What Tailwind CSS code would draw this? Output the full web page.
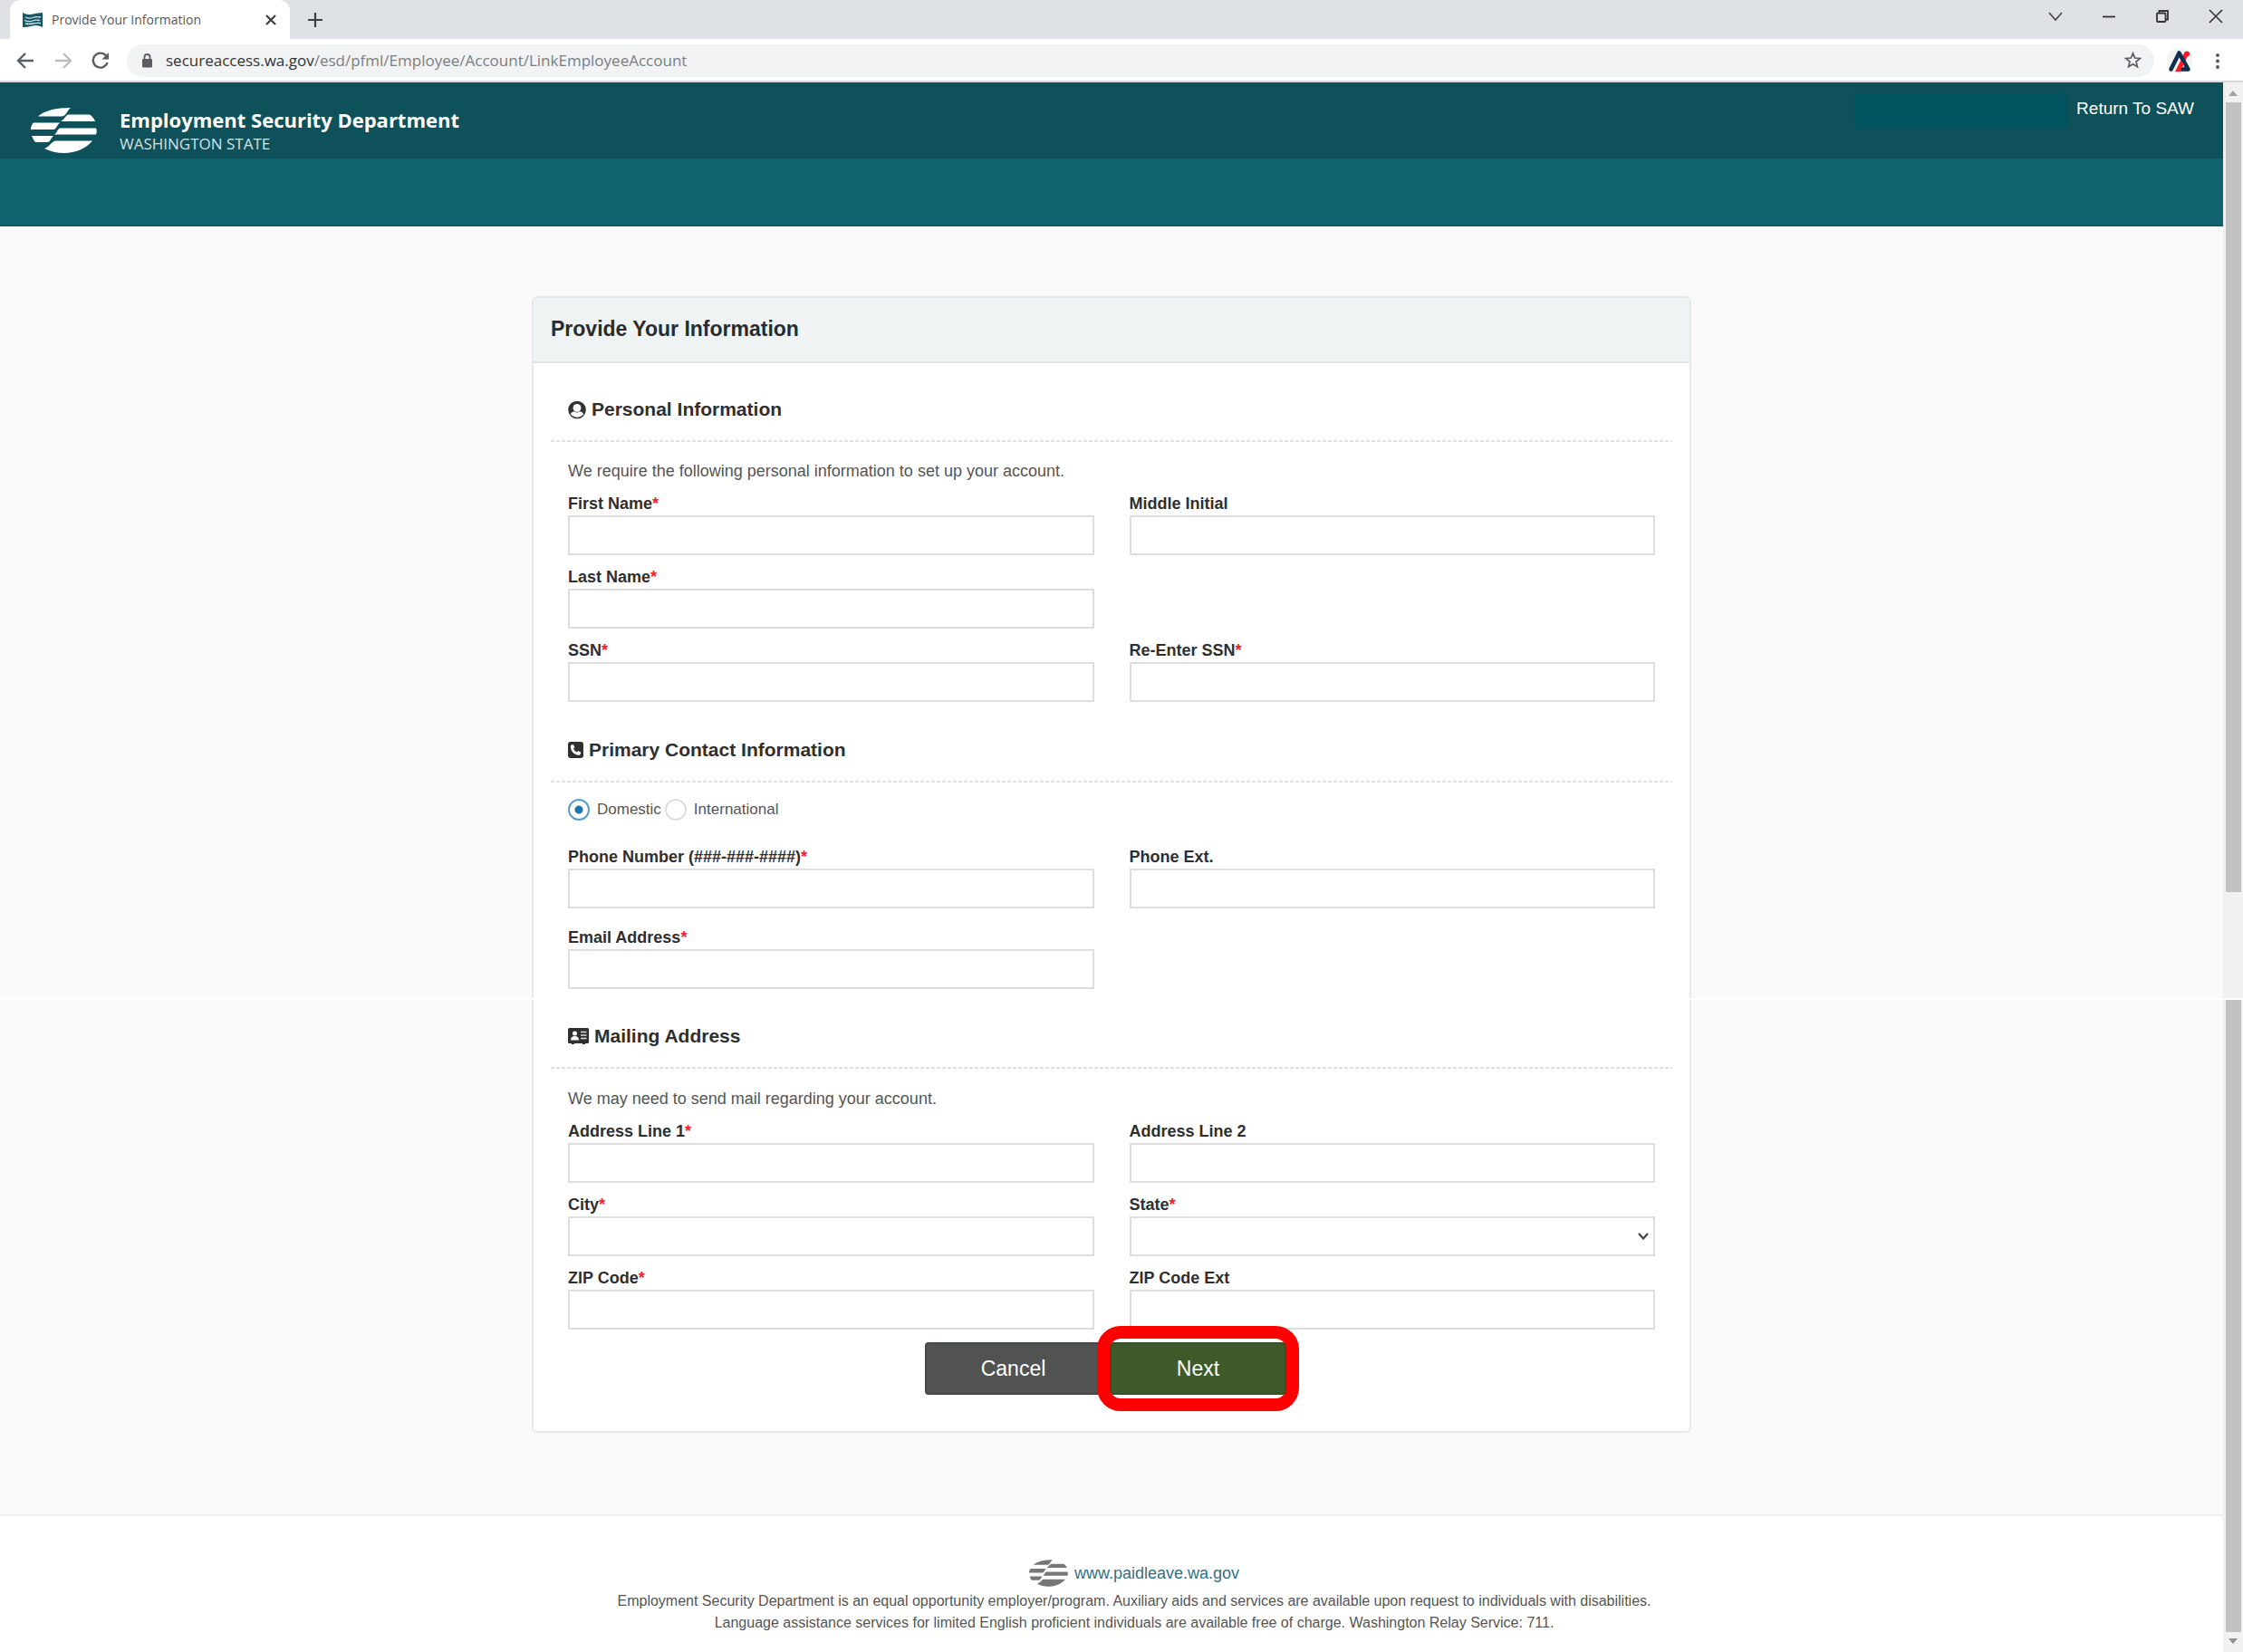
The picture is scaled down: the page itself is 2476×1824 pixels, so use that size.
<!DOCTYPE html>
<html lang="en">
<head>
  <meta charset="UTF-8" />
  <meta name="viewport" content="width=device-width, initial-scale=1" />
  <title>Provide Your Information</title>
  <!-- Tailwind CSS CDN -->
  <script src="https://cdn.jsdelivr.net/npm/@tailwindcss/browser@4"></script>
</head>
<body class="bg-white min-h-screen flex flex-col font-['Liberation_Sans',Arial,sans-serif] text-[18px] text-[#555]">

  <!-- Shared symbols -->
  <svg class="hidden" aria-hidden="true">
    <symbol id="esd-logo" viewBox="0 0 73 50">
      <path d="M8 9.500 C15 3 28 0 44 0 C40 3 39 9.500 34 9.500 Z" />
      <path d="M41 7.500 H65 C68 9.500 70 12 71 15 H33 C37 13 38 9 41 7.500 Z" />
      <path d="M3 16.500 H32 C29 19 28 24 25 24 H0 C0 21 1 18 3 16.500 Z" />
      <path d="M32 22.500 H72 C73 24 73 27 72 29.500 H26 C29 28 29 24 32 22.500 Z" />
      <path d="M1 31 H25 C22 33 22 38 18 38 H5 C3 36 2 33 1 31 Z" />
      <path d="M27 36.500 H68 C61 45 49 50 37 50 C29 50 21 48 15 45 C21 43 22 38 27 36.500 Z" />
    </symbol>
  </svg>

  <!-- Browser window -->
  <div class="bg-[#dee1e6] h-[43px] flex items-center pl-[11px] pr-[22px] text-[#3c4043]">
    <div class="bg-white h-full w-[309px] rounded-t-xl flex items-center pl-[14px] pr-[14px]">
      <svg class="w-[22px] h-[16px]" viewBox="0 0 22 16">
        <path d="M0 0 Q5 3 11 1.500 T22 0 V16 Q16 13 11 14.500 T0 16 Z" fill="#165866" />
        <path d="M3 5 Q7 7 11 5.500 T20 5 M2 8.500 Q7 10.500 11 9 T19 8.500 M3 12 Q7 13 11 12 T20 11.500" stroke="#cfe0e3" stroke-width="1.300" fill="none" />
      </svg>
      <span class="ml-[10px] grow font-['Open_Sans',sans-serif] text-[14px] text-[#55585c] whitespace-nowrap">Provide Your Information</span>
      <button type="button" aria-label="Close tab">
        <svg class="w-[14px] h-[14px]" viewBox="0 0 14 14" stroke="#3c4043" stroke-width="2.200"><path d="M2 2 L12 12 M12 2 L2 12" /></svg>
      </button>
    </div>
    <button type="button" aria-label="New tab" class="ml-5">
      <svg class="w-[16px] h-[16px]" viewBox="0 0 16 16" stroke="#3c4043" stroke-width="2.200"><path d="M8 0 V16 M0 8 H16" /></svg>
    </button>
    <div class="ml-auto flex items-center gap-[43px] pb-[7px]">
      <button type="button" aria-label="Search tabs"><svg class="w-[16px] h-[16px]" viewBox="0 0 16 16" fill="none" stroke="#444" stroke-width="1.600"><path d="M1 4 L8 12 L15 4" /></svg></button>
      <button type="button" aria-label="Minimize"><svg class="w-[16px] h-[16px]" viewBox="0 0 16 16" stroke="#333" stroke-width="1.800"><path d="M1 8.500 H15" /></svg></button>
      <button type="button" aria-label="Restore"><svg class="w-[16px] h-[16px]" viewBox="0 0 16 16" fill="none" stroke="#333" stroke-width="1.800"><rect x="2" y="4.500" width="9.500" height="9.500" rx="1" /><path d="M4.500 4 V2 H14 V11.500 H12" /></svg></button>
      <button type="button" aria-label="Close"><svg class="w-[16px] h-[16px]" viewBox="0 0 16 16" stroke="#333" stroke-width="1.600"><path d="M1 1 L15 15 M15 1 L1 15" /></svg></button>
    </div>
  </div>
  <div class="bg-white h-12 border-b-2 border-[#d5d8db] flex items-center pt-px pl-[18px] pr-[24px]">
    <button type="button" aria-label="Back"><svg class="w-5 h-5" viewBox="0 0 20 20" fill="none" stroke="#5a5d61" stroke-width="2.300"><path d="M19 10 H3 M10 2 L2 10 L10 18" /></svg></button>
    <button type="button" aria-label="Forward" class="ml-[22px]"><svg class="w-5 h-5" viewBox="0 0 20 20" fill="none" stroke="#b9bbbe" stroke-width="2.300"><path d="M1 10 H17 M10 2 L18 10 L10 18" /></svg></button>
    <button type="button" aria-label="Reload" class="ml-[21px]"><svg class="w-5 h-5" viewBox="0 0 20 20" fill="none" stroke="#5a5d61" stroke-width="2.400"><path d="M17.500 12 A8 8 0 1 1 16 4.500" /><path d="M19 1 V8.500 H11.500 Z" fill="#5a5d61" stroke="none" /></svg></button>
    <div class="ml-[19px] grow h-9 rounded-full bg-[#f1f3f4] flex items-center pl-[16px] pr-[14px]">
      <svg class="w-[13px] h-[16px]" viewBox="0 0 13 16"><path d="M3.500 7 V4 A3 3 0 0 1 9.500 4 V7" fill="none" stroke="#5a5d61" stroke-width="1.800" /><rect x="1" y="6" width="11" height="9.500" rx="1.300" fill="#5a5d61" /></svg>
      <span class="ml-[14px] grow font-['Open_Sans',sans-serif] text-[17px] text-[#7b7e82]"><span class="text-[#303337]">secureaccess.wa.gov</span>/esd/pfml/Employee/Account/LinkEmployeeAccount</span>
      <svg class="w-[19px] h-[19px]" viewBox="0 0 20 20" fill="none" stroke="#5a5d61" stroke-width="1.800"><path d="M10 2 L12.300 7.400 L18.200 7.900 L13.700 11.700 L15.100 17.500 L10 14.400 L4.900 17.500 L6.300 11.700 L1.800 7.900 L7.700 7.400 Z" /></svg>
    </div>
    <svg class="ml-[14px] w-7 h-7" viewBox="0 0 28 28">
      <circle cx="14" cy="14" r="14" fill="#f1f3f4" />
      <path d="M21 7 L17 15" stroke="#fb1a24" stroke-width="5" />
      <circle cx="22" cy="6.500" r="3" fill="#fb1a24" />
      <path d="M4.500 23.500 L13.500 5.500 L23.500 23.500 H16" fill="none" stroke="#0e2f50" stroke-width="4.600" stroke-linecap="round" stroke-linejoin="round" />
      <path d="M9 26 L15 14 L19 17.500 L14.500 26 Z" fill="#fb1a24" />
      <path d="M8 26 L14.500 13" stroke="#fff" stroke-width="1" />
    </svg>
    <button type="button" aria-label="Menu" class="ml-[24px]"><svg class="w-[8px] h-5" viewBox="0 0 8 20" fill="#5a5d61"><circle cx="4" cy="4" r="2" /><circle cx="4" cy="10.500" r="2" /><circle cx="4" cy="17" r="2" /></svg></button>
  </div>

  <form class="grow flex flex-col">
    <!-- Upper half -->
    <div class="flex">
      <div class="grow bg-[#fafafa]">
        <header>
          <div class="bg-[#0e515a] h-[84px] flex pl-[34px] pr-8 text-white">
            <svg class="w-[73px] h-[50px] mt-[28px] fill-white"><use href="#esd-logo" /></svg>
            <div class="ml-[25px] mt-[27px] font-['Open_Sans',sans-serif]">
              <p class="text-[22px] leading-[28px] font-bold">Employment Security Department</p>
              <p class="text-[17px] leading-[26px] text-[#d3e0e2]">WASHINGTON STATE</p>
            </div>
            <div class="ml-auto mt-3 w-[235px] h-[39px] bg-[#00535f]"></div>
            <a href="#" class="ml-[10px] mt-4 text-[19px] leading-[26px]">Return To SAW</a>
          </div>
          <div class="bg-[#11646f] h-[75px] border-b-2 border-[#0e5863]"></div>
        </header>

        <main class="pt-[77px] flex justify-center">
          <div class="w-full max-w-[1280px] bg-white border-2 border-b-0 border-[#e6e8e9] rounded-t-md">
            <h1 class="bg-[#eff3f4] border-b-2 border-[#e1e5e6] h-[72px] pl-[19px] pb-[2px] flex items-center text-[23px] font-bold text-[#2b2b2b]">Provide Your Information</h1>
            <div class="px-[19px] pt-[35px] pb-[10px]">
              <h2 class="px-[19px] pb-5 bg-[repeating-linear-gradient(90deg,#e2e2e2_0_4px,transparent_4px_6px)] bg-[length:100%_2px] bg-no-repeat bg-bottom flex items-center gap-[6px] text-[21px] leading-[32px] font-bold text-[#2f2f2f]">
                <svg class="w-[20px] h-[21px]" viewBox="0 0 21 21">
                  <circle cx="10.500" cy="10.500" r="9.500" fill="#333" stroke="#333" stroke-width="1.600" />
                  <path d="M3 15.500 C4 13 6 12.500 7.500 12.300 C9.500 14 11.500 14 13.500 12.300 C15 12.500 17 13 18 15.500 C14.500 20.300 6.500 20.300 3 15.500 Z" fill="#fff" />
                  <circle cx="10.500" cy="8.300" r="4.600" fill="#fff" />
                </svg>
                Personal Information
              </h2>
              <div class="px-[19px] pt-[19px]">
                <p class="leading-[26px] mb-[10px]">We require the following personal information to set up your account.</p>
                <div class="grid grid-cols-2 gap-x-[39px] gap-y-[11px]">
                  <div>
                    <label for="first" class="block leading-[26px] font-bold text-[#2f2f2f]">First Name<span class="text-[#f5222d]">*</span></label>
                    <input id="first" type="text" class="block w-full h-11 border-2 border-[#dedede] bg-white px-3" />
                  </div>
                  <div>
                    <label for="middle" class="block leading-[26px] font-bold text-[#2f2f2f]">Middle Initial</label>
                    <input id="middle" type="text" class="block w-full h-11 border-2 border-[#dedede] bg-white px-3" />
                  </div>
                  <div>
                    <label for="last" class="block leading-[26px] font-bold text-[#2f2f2f]">Last Name<span class="text-[#f5222d]">*</span></label>
                    <input id="last" type="text" class="block w-full h-11 border-2 border-[#dedede] bg-white px-3" />
                  </div>
                  <div class="col-start-1">
                    <label for="ssn" class="block leading-[26px] font-bold text-[#2f2f2f]">SSN<span class="text-[#f5222d]">*</span></label>
                    <input id="ssn" type="text" class="block w-full h-11 border-2 border-[#dedede] bg-white px-3" />
                  </div>
                  <div>
                    <label for="ssn2" class="block leading-[26px] font-bold text-[#2f2f2f]">Re-Enter SSN<span class="text-[#f5222d]">*</span></label>
                    <input id="ssn2" type="text" class="block w-full h-11 border-2 border-[#dedede] bg-white px-3" />
                  </div>
                </div>
              </div>

              <h2 class="mt-[37px] px-[19px] pb-5 bg-[repeating-linear-gradient(90deg,#e2e2e2_0_4px,transparent_4px_6px)] bg-[length:100%_2px] bg-no-repeat bg-bottom flex items-center gap-[6px] text-[21px] leading-[32px] font-bold text-[#2f2f2f]">
                <svg class="w-[17px] h-[18px]" viewBox="0 0 17 18">
                  <rect width="17" height="18" rx="3" fill="#2f2f2f" />
                  <path d="M3 4 L5.500 2.800 L7.500 6.200 L6 7.500 C6.800 9.500 8 10.700 9.800 11.500 L11.200 10 L14.300 11.800 L13.300 14.500 C8 16 2 10 3 4 Z" fill="#fff" />
                </svg>
                Primary Contact Information
              </h2>
              <div class="px-[19px] pt-[18px]">
                <div class="flex items-center text-[17px] leading-[24px] h-6 mb-[27px]">
                  <input id="domestic" type="radio" name="region" checked class="appearance-none w-6 h-6 rounded-full border-2 border-[#dedede] checked:border-[#5b9dc9] bg-white checked:bg-[radial-gradient(circle,#1f76ac_4px,transparent_5px)]" />
                  <label for="domestic" class="ml-2">Domestic</label>
                  <input id="international" type="radio" name="region" class="ml-1 appearance-none w-6 h-6 rounded-full border-2 border-[#dedede] checked:border-[#5b9dc9] bg-white checked:bg-[radial-gradient(circle,#1f76ac_4px,transparent_5px)]" />
                  <label for="international" class="ml-2">International</label>
                </div>
                <div class="grid grid-cols-2 gap-x-[39px] gap-y-[19px]">
                  <div>
                    <label for="phone" class="block leading-[26px] font-bold text-[#2f2f2f]">Phone Number (###-###-####)<span class="text-[#f5222d]">*</span></label>
                    <input id="phone" type="tel" class="block w-full h-11 border-2 border-[#dedede] bg-white px-3" />
                  </div>
                  <div>
                    <label for="ext" class="block leading-[26px] font-bold text-[#2f2f2f]">Phone Ext.</label>
                    <input id="ext" type="text" class="block w-full h-11 border-2 border-[#dedede] bg-white px-3" />
                  </div>
                  <div>
                    <label for="email" class="block leading-[26px] font-bold text-[#2f2f2f]">Email Address<span class="text-[#f5222d]">*</span></label>
                    <input id="email" type="email" class="block w-full h-11 border-2 border-[#dedede] bg-white px-3" />
                  </div>
                </div>
              </div>
            </div>
          </div>
        </main>
      </div>
      <div class="w-[22px] bg-[#f1f1f1] flex flex-col items-center shrink-0">
        <svg class="w-[10px] h-[6px] mt-[9px] mb-[7px] fill-[#a3a3a3]" viewBox="0 0 10 6"><path d="M0 6 L5 0 L10 6 Z" /></svg>
        <div class="w-[17px] grow mb-[117px] bg-[#c1c1c1]"></div>
      </div>
    </div>

    <!-- Lower half -->
    <div class="grow flex mt-[2px]">
      <div class="grow bg-[#fafafa] flex flex-col">
        <div class="pb-[90px] flex justify-center">
          <div class="w-full max-w-[1280px] bg-white border-2 border-t-0 border-[#e6e8e9] rounded-b-md px-[19px] pt-6 pb-10">
            <h2 class="px-[19px] pb-5 bg-[repeating-linear-gradient(90deg,#e2e2e2_0_4px,transparent_4px_6px)] bg-[length:100%_2px] bg-no-repeat bg-bottom flex items-center gap-[6px] text-[21px] leading-[32px] font-bold text-[#2f2f2f]">
              <svg class="w-[23px] h-[18px]" viewBox="0 0 23 18">
                <rect width="23" height="17" rx="1.500" fill="#2f2f2f" />
                <circle cx="7.500" cy="6" r="2.500" fill="#fff" />
                <path d="M3 13.500 C3 10.500 4.500 9 7.500 9 S12 10.500 12 13.500 Z" fill="#fff" />
                <path d="M14 4.500 H20.500 M14 8 H20.500 M14 11.500 H20.500" stroke="#ddd" stroke-width="1.600" />
                <path d="M4 17.500 H7 M16 17.500 H19" stroke="#2f2f2f" stroke-width="1" />
              </svg>
              Mailing Address
            </h2>
            <div class="px-[19px] pt-5">
              <p class="leading-[26px] mb-[10px]">We may need to send mail regarding your account.</p>
              <div class="grid grid-cols-2 gap-x-[39px] gap-y-[11px]">
                <div>
                  <label for="addr1" class="block leading-[26px] font-bold text-[#2f2f2f]">Address Line 1<span class="text-[#f5222d]">*</span></label>
                  <input id="addr1" type="text" class="block w-full h-11 border-2 border-[#dedede] bg-white px-3" />
                </div>
                <div>
                  <label for="addr2" class="block leading-[26px] font-bold text-[#2f2f2f]">Address Line 2</label>
                  <input id="addr2" type="text" class="block w-full h-11 border-2 border-[#dedede] bg-white px-3" />
                </div>
                <div>
                  <label for="city" class="block leading-[26px] font-bold text-[#2f2f2f]">City<span class="text-[#f5222d]">*</span></label>
                  <input id="city" type="text" class="block w-full h-11 border-2 border-[#dedede] bg-white px-3" />
                </div>
                <div>
                  <label for="state" class="block leading-[26px] font-bold text-[#2f2f2f]">State<span class="text-[#f5222d]">*</span></label>
                  <div class="relative">
                    <select id="state" class="block appearance-none w-full h-11 border-2 border-[#dedede] bg-white px-3"><option></option></select>
                    <svg class="absolute right-[7px] top-[18px] w-3 h-2 pointer-events-none" viewBox="0 0 12 8" fill="none" stroke="#444" stroke-width="2.200"><path d="M1 1 L6 6.500 L11 1" /></svg>
                  </div>
                </div>
                <div>
                  <label for="zip" class="block leading-[26px] font-bold text-[#2f2f2f]">ZIP Code<span class="text-[#f5222d]">*</span></label>
                  <input id="zip" type="text" class="block w-full h-11 border-2 border-[#dedede] bg-white px-3" />
                </div>
                <div>
                  <label for="zipext" class="block leading-[26px] font-bold text-[#2f2f2f]">ZIP Code Ext</label>
                  <input id="zipext" type="text" class="block w-full h-11 border-2 border-[#dedede] bg-white px-3" />
                </div>
              </div>
            </div>
            <div class="mt-[14px] pr-[13px] flex justify-center gap-[9px] text-[23px] text-white">
              <button type="button" class="w-[195px] h-[58px] rounded bg-[#515352] border-2 border-[#454747]">Cancel</button>
              <div class="relative">
                <button type="submit" class="w-[195px] h-[58px] rounded bg-[#3e5a29] border-2 border-[#355022]">Next</button>
                <!-- Red highlight around the button -->
                <span class="absolute -inset-x-[14px] -inset-y-[18px] border-[14px] border-[#fe0000] rounded-[26px] pointer-events-none"></span>
              </div>
            </div>
          </div>
        </div>

        <footer class="grow bg-white border-t-2 border-[#eeeeee] pt-[48px] pl-[50px] text-center text-[16px] leading-[24px] text-[#555]">
          <div class="flex items-center justify-center gap-[7px] mb-[4px]">
            <svg class="w-[43px] h-[30px] fill-[#777]"><use href="#esd-logo" /></svg>
            <a href="#" class="text-[18px] text-[#2f7186]">www.paidleave.wa.gov</a>
          </div>
          <p>Employment Security Department is an equal opportunity employer/program. Auxiliary aids and services are available upon request to individuals with disabilities.</p>
          <p>Language assistance services for limited English proficient individuals are available free of charge. Washington Relay Service: 711.</p>
        </footer>
      </div>
      <div class="w-[22px] bg-[#f1f1f1] flex flex-col items-center shrink-0">
        <div class="w-[17px] grow bg-[#c1c1c1]"></div>
        <svg class="w-[10px] h-[6px] mt-[7px] mb-[9px] fill-[#8f8f8f]" viewBox="0 0 10 6"><path d="M0 0 L5 6 L10 0 Z" /></svg>
      </div>
    </div>
  </form>

</body>
</html>
